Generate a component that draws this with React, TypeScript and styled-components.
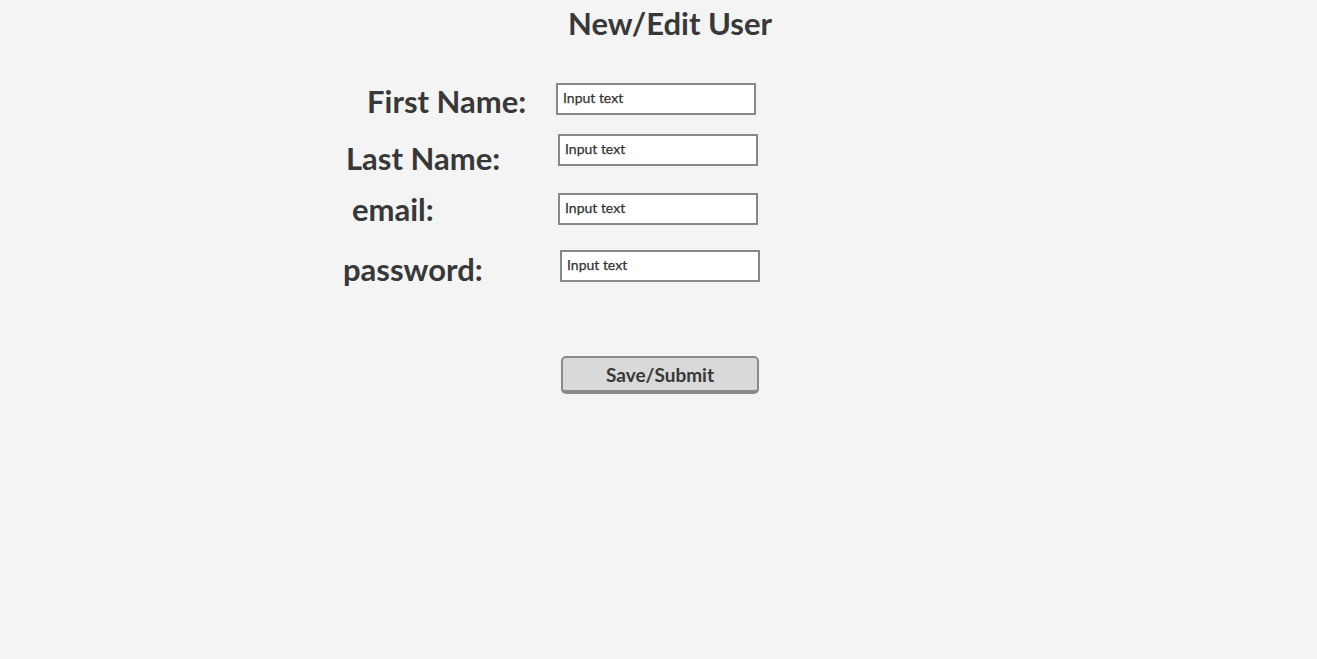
import React from "react";
import styled, { createGlobalStyle } from "styled-components";

const Global = createGlobalStyle`
  html, body { margin: 0; padding: 0; background: #f4f4f4; }
  body { font-family: Lato, "Noto Sans", sans-serif; color: #383838; }
`;

const Page = styled.div`
  width: 1317px;
  height: 659px;
  background: #f4f4f4;
  overflow: hidden;
`;

const Title = styled.h1`
  margin: 5px 0 0 568px;
  font-size: 31px;
  line-height: 36px;
  font-weight: 700;
  color: #383838;
`;

const Form = styled.div`
  display: flex;
  flex-direction: column;
`;

const Row = styled.div<{ $gap: number }>`
  display: flex;
  align-items: flex-start;
  margin-top: ${(p) => p.$gap}px;
`;

const Label = styled.div<{ $x: number; $w: number; $dy: number }>`
  margin-left: ${(p) => p.$x}px;
  width: ${(p) => p.$w}px;
  margin-top: ${(p) => p.$dy}px;
  font-size: 31px;
  line-height: 36px;
  font-weight: 700;
  color: #383838;
  white-space: nowrap;
`;

const TextBox = styled.div<{ $dy: number }>`
  box-sizing: border-box;
  width: 200px;
  height: 32px;
  margin-top: ${(p) => p.$dy}px;
  border: 2px solid #888888;
  background: #ffffff;
  padding: 0 5px 4px 5px;
  display: flex;
  align-items: center;
  font-size: 14px;
  color: #333333;
  -webkit-text-stroke: 0.25px #333333;
`;

const ButtonRow = styled.div`
  display: flex;
`;

const Button = styled.button<{ $x: number; $gap: number }>`
  box-sizing: border-box;
  margin: ${(p) => p.$gap}px 0 0 ${(p) => p.$x}px;
  width: 198px;
  height: 38px;
  background: #d9d9d9;
  border: 2px solid #8a8a8a;
  border-bottom-width: 4px;
  border-radius: 5px;
  font-family: Lato, "Noto Sans", sans-serif;
  font-size: 19px;
  font-weight: 700;
  color: #383838;
  padding: 0;
  cursor: pointer;
`;

const fields = [
  { label: "First Name:", x: 367, inputX: 556, labelDy: 0, inputDy: 0, gap: 42 },
  { label: "Last Name:", x: 346, inputX: 558, labelDy: 6, inputDy: 0, gap: 15 },
  { label: "email:", x: 352, inputX: 558, labelDy: 0, inputDy: 2, gap: 15 },
  { label: "password:", x: 343, inputX: 560, labelDy: 1, inputDy: 0, gap: 23 },
];

export default function App() {
  return (
    <Page>
      <Global />
      <Title>New/Edit User</Title>
      <Form>
        {fields.map((f) => (
          <Row key={f.label} $gap={f.gap}>
            <Label $x={f.x} $w={f.inputX - f.x} $dy={f.labelDy}>
              {f.label}
            </Label>
            <TextBox $dy={f.inputDy}>Input text</TextBox>
          </Row>
        ))}
        <ButtonRow>
          <Button $x={561} $gap={69}>Save/Submit</Button>
        </ButtonRow>
      </Form>
    </Page>
  );
}
